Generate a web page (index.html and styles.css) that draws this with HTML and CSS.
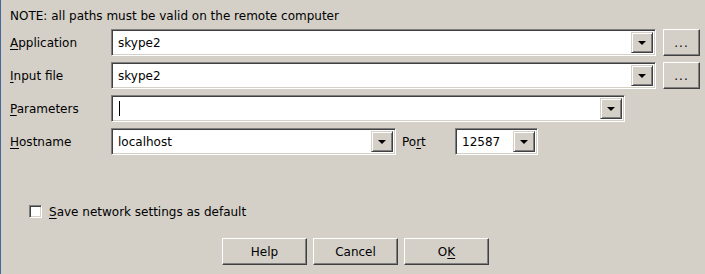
FILE: index.html
```html
<!DOCTYPE html>
<html lang="en">
<head>
    <meta charset="UTF-8">
    <title>Remote Debugging</title>
    <link rel="stylesheet" href="styles.css">
</head>
<body>
    <div class="dialog">
        <p class="note">NOTE: all paths must be valid on the remote computer</p>

        <div class="form">
            <div class="row">
                <label class="label"><u>A</u>pplication</label>
                <div class="combo combo-wide">
                    <span class="combo-text">skype2</span>
                    <span class="drop"><span class="arrow"></span></span>
                </div>
                <button class="button browse-btn">...</button>
            </div>

            <div class="row">
                <label class="label"><u>I</u>nput file</label>
                <div class="combo combo-wide">
                    <span class="combo-text">skype2</span>
                    <span class="drop"><span class="arrow"></span></span>
                </div>
                <button class="button browse-btn">...</button>
            </div>

            <div class="row">
                <label class="label"><u>P</u>arameters</label>
                <div class="combo combo-params">
                    <span class="combo-text"><span class="caret"></span></span>
                    <span class="drop"><span class="arrow"></span></span>
                </div>
            </div>

            <div class="row">
                <label class="label"><u>H</u>ostname</label>
                <div class="combo combo-host">
                    <span class="combo-text">localhost</span>
                    <span class="drop"><span class="arrow"></span></span>
                </div>
                <label class="port-label">Po<u>r</u>t</label>
                <div class="combo combo-port">
                    <span class="combo-text">12587</span>
                    <span class="drop"><span class="arrow"></span></span>
                </div>
            </div>
        </div>

        <label class="check-row">
            <span class="checkbox"></span>
            <span><u>S</u>ave network settings as default</span>
        </label>

        <div class="button-group">
            <button class="button dialog-btn">Help</button>
            <button class="button dialog-btn">Cancel</button>
            <button class="button dialog-btn">O<u>K</u></button>
        </div>
    </div>
</body>
</html>
```

FILE: styles.css
```css
* {
    margin: 0;
    padding: 0;
    box-sizing: border-box;
}

body {
    background: #d4d0c8;
    font-family: 'DejaVu Sans', sans-serif;
    font-size: 12px;
    color: #000000;
    min-height: 100vh;
    border-left: 1px solid #4a659c;
    overflow: hidden;
}

.dialog {
    padding: 9px 0 0 9px;
    display: flex;
    flex-direction: column;
}

.note {
    line-height: 14px;
    height: 14px;
}

u {
    text-decoration: underline;
    text-underline-offset: 2px;
}

/* form rows */
.form {
    margin-top: 6px;
    display: flex;
    flex-direction: column;
    gap: 6px;
}

.row {
    display: flex;
    align-items: center;
    height: 27px;
}

.label {
    width: 101px;
    line-height: 14px;
}

/* sunken combo box */
.combo {
    height: 27px;
    background: #FFFFFF;
    border: 1px solid;
    border-color: #808080 #FFFFFF #FFFFFF #808080;
    box-shadow: inset 1px 1px 0 #404040, inset -1px -1px 0 #d4d0c8;
    display: flex;
    align-items: stretch;
    padding: 2px;
}

.combo-wide {
    width: 545px;
}

.combo-params {
    width: 514px;
}

.combo-host {
    width: 285px;
}

.combo-port {
    width: 83px;
}

.combo-text {
    flex: 1;
    display: flex;
    align-items: center;
    padding-left: 4px;
    line-height: 14px;
}

.caret {
    width: 1px;
    height: 15px;
    background: #000000;
    margin-left: 1px;
}

.drop {
    width: 22px;
    background: #d4d0c8;
    border: 1px solid;
    border-color: #d4d0c8 #404040 #404040 #d4d0c8;
    box-shadow: inset 1px 1px 0 #FFFFFF, inset -1px -1px 0 #808080;
    display: flex;
    align-items: center;
    justify-content: center;
}

.arrow {
    width: 0;
    height: 0;
    border-left: 4px solid transparent;
    border-right: 4px solid transparent;
    border-top: 4px solid #000000;
    margin-top: 1px;
}

/* raised buttons */
.button {
    font-family: 'DejaVu Sans', sans-serif;
    font-size: 12px;
    color: #000000;
    background: #d4d0c8;
    border: 1px solid;
    border-color: #FFFFFF #404040 #404040 #FFFFFF;
    box-shadow: inset -1px -1px 0 #808080;
    height: 27px;
    cursor: pointer;
}

.browse-btn {
    width: 37px;
    margin-left: 7px;
    letter-spacing: 1px;
}

.port-label {
    width: 53px;
    margin-left: 6px;
    line-height: 14px;
}

/* checkbox */
.check-row {
    margin-top: 50px;
    margin-left: 19px;
    display: flex;
    align-items: center;
    gap: 7px;
    height: 13px;
    line-height: 14px;
}

.checkbox {
    width: 13px;
    height: 13px;
    background: #FFFFFF;
    border: 1px solid;
    border-color: #808080 #FFFFFF #FFFFFF #808080;
    box-shadow: inset 1px 1px 0 #404040, inset -1px -1px 0 #d4d0c8;
}

.button-group {
    margin-top: 20px;
    display: flex;
    justify-content: center;
    gap: 6px;
    padding-right: 4px;
}

.dialog-btn {
    width: 85px;
}
```
